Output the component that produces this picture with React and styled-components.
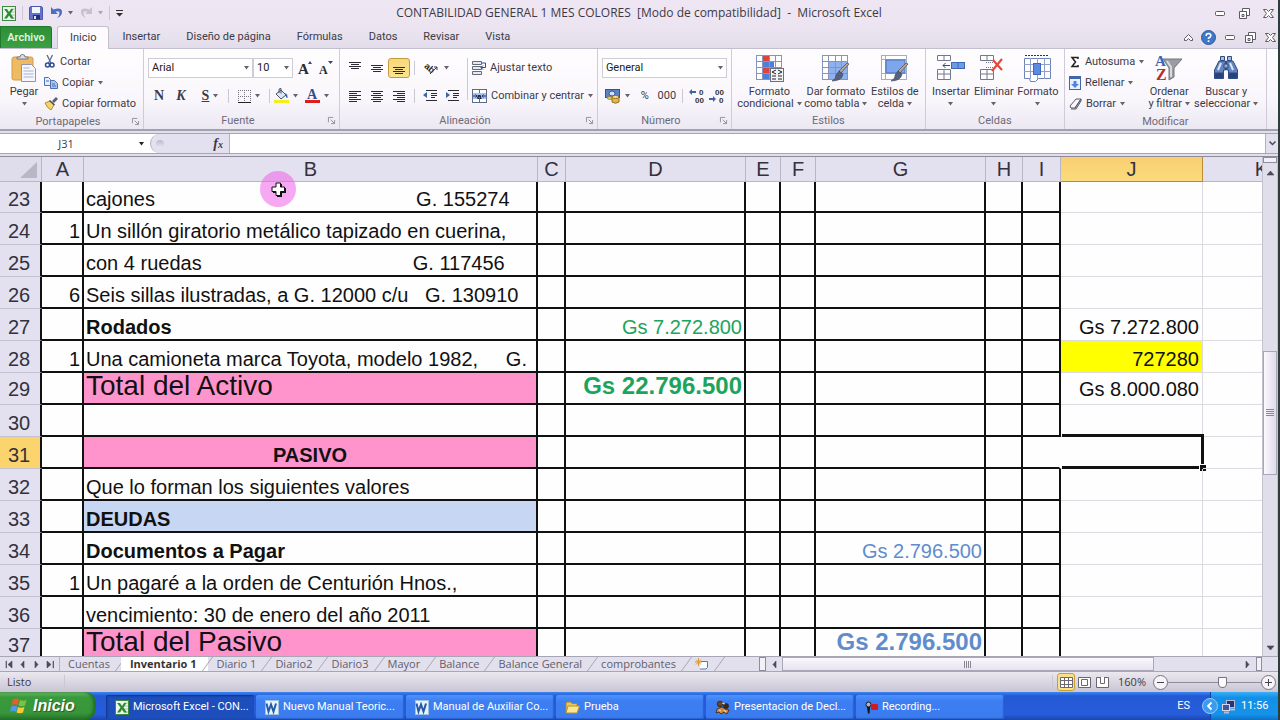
import React, { useState } from 'react';
import styled, { createGlobalStyle, css } from 'styled-components';

const GlobalStyle = createGlobalStyle`
  * { box-sizing: border-box; }
  body { margin: 0; }
  button, input, select { font: inherit; color: inherit; margin: 0; padding: 0; }
  button { background: none; border: 0; cursor: pointer; }
  svg { display: block; flex: none; overflow: visible; }
`;

const Window = styled.div`
  display: flex;
  flex-direction: column;
  height: 100vh;
  overflow: hidden;
  border-right: 2px solid #2e3c3c;
  background: #e3deec;
  color: #3c3a46;
  font-family: 'Open Sans', 'Noto Sans', sans-serif;
  font-size: 11px;
  line-height: 12px;
`;

/* ---------- title bar and tabs ---------- */

const TitleBar = styled.header`
  display: grid;
  grid-template-columns: 1fr auto 1fr;
  align-items: center;
  height: 26px;
  background: linear-gradient(#efe5f3, #ece5f1);
`;

const QuickAccess = styled.div`
  display: flex;
  align-items: center;
  gap: 6px;
  height: 22px;
  padding-left: 2px;
`;

const Title = styled.h1`
  margin: 0;
  font-size: 12px;
  font-weight: 400;
  white-space: pre;
`;

const WindowButtons = styled.div`
  display: flex;
  justify-content: flex-end;
  align-items: center;
  gap: 8px;
  margin-left: auto;
  padding-right: 2px;
`;

const GlyphButton = styled.button`
  display: flex;
  align-items: center;
  justify-content: center;
  gap: 5px;
  width: ${(p) => p.$w || 16}px;
  height: 20px;
`;

const Tabs = styled.nav`
  display: flex;
  align-items: stretch;
  height: 23px;
  background: linear-gradient(#ece5f1, #e3dcea);
  border-bottom: 1px solid #c3bfcd;
  font-family: Roboto, 'Open Sans', sans-serif;
`;

const Tab = styled.button`
  padding: 0 13px;
  ${(p) => p.$active && css`
    margin-bottom: -1px;
    padding: 0 12px;
    border: 1px solid #c3bfcd;
    border-bottom: 0;
    border-radius: 3px 3px 0 0;
    background: #fdfbfe;
  `}
`;

const FileTab = styled.button`
  width: 52px;
  margin-right: 5px;
  border: 1px solid #1f7a2c;
  border-bottom: 0;
  border-radius: 0 3px 0 0;
  background: linear-gradient(#2f8f37, #3ba043);
  color: #dff5dc;
  font-weight: 600;
`;

/* ---------- ribbon ---------- */

const Ribbon = styled.section`
  display: flex;
  height: 82px;
  background: linear-gradient(#fefdfe, #faf7fc 60%, #ece8f3);
  border-bottom: 2px solid #a4a1ae;
  font-family: Roboto, 'Open Sans', sans-serif;
`;

const Group = styled.div`
  display: flex;
  flex-direction: column;
  flex: 0 0 ${(p) => p.$w}px;
  border-right: 1px solid #cfcbd8;
`;

const GroupBody = styled.div`
  display: flex;
  flex: 1;
  padding: 2px 4px 0;
`;

const GroupLabel = styled.div`
  display: flex;
  align-items: center;
  height: 17px;
  padding: 0 4px;
  color: #6d6a78;
  span { flex: 1; text-align: center; }
`;

const Stack = styled.div`
  display: flex;
  flex-direction: column;
`;

const ToolRow = styled.div`
  display: flex;
  align-items: center;
  height: ${(p) => p.$h || 27}px;
`;

const Tool = styled.button`
  display: flex;
  align-items: center;
  justify-content: center;
  gap: 4px;
  width: ${(p) => p.$w || 22}px;
  height: 20px;
  font-family: ${(p) => (p.$serif ? "'Liberation Serif', serif" : 'inherit')};
  font-size: ${(p) => p.$size || 11}px;
  ${(p) => p.$on && css`
    border: 1px solid #c29a3a;
    border-radius: 3px;
    background: linear-gradient(#f6d87d, #fbe58f);
  `}
`;

const SmallButton = styled.button`
  display: flex;
  align-items: center;
  gap: 4px;
  height: 21px;
  white-space: nowrap;
`;

const LargeButton = styled.button`
  display: flex;
  flex-direction: column;
  align-items: center;
  width: ${(p) => p.$w}px;
  padding-top: 3px;
  white-space: nowrap;
  svg { margin-bottom: 4px; }
  span { display: flex; align-items: center; gap: 3px; height: 12px; }
  span svg { margin: 0; }
`;

const Divider = styled.i`
  width: 1px;
  height: ${(p) => p.$h || 14}px;
  margin: 0 ${(p) => p.$m || 0}px;
  background: #cbc7d5;
`;

const SelectBox = styled.label`
  position: relative;
  display: flex;
  width: ${(p) => p.$w}px;
  height: 20px;
  border: 1px solid #cfccd8;
  background: #fff;
  color: #222;
  select {
    flex: 1;
    padding-left: 3px;
    border: 0;
    background: none;
    appearance: none;
  }
  svg {
    position: absolute;
    right: 3px;
    top: 7px;
    pointer-events: none;
  }
`;

/* ---------- formula bar ---------- */

const FormulaBar = styled.div`
  display: flex;
  height: 21px;
  margin: 2px 0;
  border: solid #a8a5b3;
  border-width: 1px 0;
  background: #fff;
`;

const NameBox = styled.input`
  width: 132px;
  border: 0;
  background: #fff;
  text-align: center;
`;

const FxZone = styled.div`
  display: flex;
  align-items: center;
  justify-content: space-between;
  width: 80px;
  padding: 0 6px 0 5px;
  border: 1px solid #b3b0c0;
  border-width: 0 1px;
  border-radius: 10px 0 0 10px;
  background: #e3e0f0;
`;

const Knob = styled.i`
  width: 8px;
  height: 8px;
  border-radius: 50%;
  background: linear-gradient(#bdb9ca, #ebe8f3);
`;

const FxButton = styled.button`
  font: italic bold 14px 'Liberation Serif', serif;
  small { font-size: 10px; }
`;

const FormulaInput = styled.input`
  flex: 1;
  min-width: 0;
  border: 0;
  background: #fff;
`;

const ExpandButton = styled(GlyphButton)`
  height: 19px;
  border-left: 1px solid #b3b0c0;
  background: #e3e0f0;
`;

/* ---------- sheet ---------- */

const SheetArea = styled.main`
  position: relative;
  display: flex;
  flex: 1;
  min-height: 0;
  border-top: 1px solid #8e8b9b;
`;

const SheetView = styled.div`
  flex: 1;
  min-width: 0;
  overflow: hidden;
  background: #fefefe;
`;

const Table = styled.table`
  width: 100%;
  min-width: 1321px;
  table-layout: fixed;
  border-collapse: separate;
  border-spacing: 0;
  color: #111;
  font-family: 'Liberation Sans', Arial, sans-serif;
  font-size: 20px;
  line-height: 24px;
`;

const ColHead = styled.th`
  height: 25px;
  padding: 0;
  border: solid #b9b6c6;
  border-width: 0 1px 1px 0;
  background: ${(p) => (p.$on ? 'linear-gradient(#f8cf72, #fbdb7b)' : '#e3e1f0')};
  color: #33323c;
  font-weight: 400;
  ${(p) => p.$on && 'border-color: #b98d35;'}
`;

const Corner = styled.td`
  padding: 0 4px 3px 0;
  border: solid #b9b6c6;
  border-width: 0 1px 1px 0;
  background: #dfddec;
  vertical-align: bottom;
  svg { margin-left: auto; }
`;

const RowHead = styled.th`
  padding: 0 2px ${(p) => (p.$total ? 3 : 1)}px 0;
  border: solid #c4c1d1;
  border-width: 0 2px 1px 0;
  border-right-color: #111;
  background: ${(p) => (p.$on ? '#fcd46d' : '#e3e1f0')};
  color: #33323c;
  font-weight: 400;
  vertical-align: bottom;
`;

const Row = styled.tr`
  height: ${(p) => (p.$clipped ? 31 : 32)}px;
`;

const Cell = styled.td`
  position: relative;
  padding: 0 ${(p) => (p.$ruled ? 2 : 3)}px ${(p) => p.$lift}px 2px;
  border: solid ${(p) => (p.$ruled ? '#111' : '#dcdbe2')};
  border-width: ${(p) => (p.$ruled ? '0 2px 2px 0' : '0 1px 1px 0')};
  background: ${(p) => p.$fill || 'transparent'};
  color: ${(p) => p.$color || 'inherit'};
  font-size: ${(p) => p.$size || 20}px;
  font-weight: ${(p) => (p.$bold ? 700 : 400)};
  text-align: ${(p) => p.$align || 'left'};
  vertical-align: bottom;
  white-space: pre;
  ${(p) => p.$open && 'border-right-color: transparent;'}
  ${(p) => p.$selected && css`
    &::before {
      content: '';
      position: absolute;
      inset: -3px -2px -1px 1px;
      border: 3px solid #111;
      border-left: 0;
    }
    &::after {
      content: '';
      position: absolute;
      right: -4px;
      bottom: -3px;
      width: 6px;
      height: 6px;
      border: solid #fff;
      border-width: 1px 0 0 1px;
      background: #111;
    }
  `}
`;

const Pointer = styled.div`
  position: absolute;
  left: 260px;
  top: 14px;
  display: flex;
  align-items: center;
  justify-content: center;
  width: 36px;
  height: 36px;
  border-radius: 50%;
  background: rgba(238, 96, 232, 0.55);
`;

const VScroll = styled.div`
  display: grid;
  grid-template-rows: 6px 18px 171fr 124fr 164fr 18px;
  width: 16px;
  border: solid #c4c1d1;
  border-width: 0 1px;
  background: #e1deec;
  button { display: flex; align-items: center; justify-content: center; }
`;

const Thumb = styled.button`
  display: flex;
  align-items: center;
  justify-content: center;
  border: 1px solid #a9a6b8;
  background: ${(p) => (p.$across ? 'linear-gradient(#fbf9fd, #e6e2f0)' : 'linear-gradient(90deg, #fbf9fd, #dedaec)')};
`;

const SplitBox = styled.i`
  border: 1px solid #8f8c9c;
  background: #f3f1f8;
`;

/* ---------- sheet tabs and status bar ---------- */

const SheetBar = styled.div`
  display: flex;
  height: 16px;
  border: solid #a8a5b6;
  border-width: 1px 0;
  background: #e3e0ee;
  color: #615e6c;
`;

const SheetNav = styled.div`
  display: flex;
  align-items: center;
  justify-content: space-around;
  width: 60px;
  padding: 0 2px;
  border-right: 1px solid #b3b0c0;
`;

const SheetTab = styled.button`
  position: relative;
  height: 14px;
  padding: 0 11px 0 8px;
  line-height: 14px;
  white-space: nowrap;
  ${(p) => p.$active && css`
    padding: 0 12px 0 9px;
    background: #fff;
    color: #333;
    font-weight: 700;
  `}
  &::after {
    content: '';
    position: absolute;
    right: 0;
    top: 0;
    width: 1px;
    height: 14px;
    background: #a8a5b6;
    transform: skewX(-36deg);
  }
`;

const HScroll = styled.div`
  display: grid;
  grid-template-columns: 7px 14px 376fr 84fr 16px 6px;
  gap: 0 1px;
  flex: 0 0 503px;
  margin: 0 16px 0 auto;
  button { display: flex; align-items: center; justify-content: center; }
`;

const StatusBar = styled.footer`
  display: flex;
  align-items: center;
  height: 20px;
  padding: 0 2px 0 7px;
  background: linear-gradient(#ebe8f0, #c9c5d3);
  & > span { width: 57px; }
`;

const ViewTools = styled.div`
  display: flex;
  align-items: center;
  margin-left: auto;
`;

const ViewButton = styled(GlyphButton)`
  height: 18px;
  ${(p) => p.$on && css`
    border: 1px solid #c9a030;
    border-radius: 3px;
    background: #fbe08a;
  `}
`;

const ZoomSlider = styled.input`
  width: 93px;
  height: 16px;
  appearance: none;
  background: linear-gradient(#8f8c9a, #8f8c9a) center / 100% 1px no-repeat;
  &::-webkit-slider-thumb {
    appearance: none;
    width: 9px;
    height: 11px;
    border: 1px solid #77747f;
    border-radius: 1px 1px 5px 5px;
    background: #fbfafc;
  }
`;

const RoundButton = styled.button`
  display: flex;
  align-items: center;
  justify-content: center;
  width: 15px;
  height: 15px;
  border: 1px solid #77747f;
  border-radius: 50%;
  background: #f6f4f9;
`;

/* ---------- taskbar ---------- */

const Taskbar = styled.div`
  display: flex;
  height: 28px;
  background: linear-gradient(#3b86f3, #2459d4 14%, #265ddb 80%, #1d45ad);
  color: #fff;
  font-family: Roboto, 'Liberation Sans', sans-serif;
`;

const StartButton = styled.button`
  display: flex;
  align-items: center;
  gap: 5px;
  width: 96px;
  margin-right: 10px;
  padding-left: 10px;
  border-radius: 0 10px 12px 0;
  background: linear-gradient(#6cb96c, #399a3b 18%, #37963a 75%, #226f26);
  box-shadow: inset -3px 0 3px #23702a;
  font: italic bold 16px 'Liberation Sans', sans-serif;
  text-shadow: 1px 1px 1px #245a22;
`;

const TaskButton = styled.button`
  display: flex;
  align-items: center;
  gap: 4px;
  flex: 0 1 148px;
  min-width: 0;
  margin: 3px 2px 1px 0;
  padding-left: 9px;
  border-radius: 2px;
  background: ${(p) => (p.$active ? '#1d4ebb' : 'linear-gradient(#4e92fa, #3c7ff3 25%, #3b7bee)')};
  box-shadow: ${(p) => (p.$active ? 'inset 1px 1px 2px #12338a' : 'inset -1px -1px 1px #2a60cc')};
  white-space: nowrap;
`;

const Language = styled.span`
  align-self: center;
  margin-left: auto;
  padding-right: 20px;
`;

const Tray = styled.div`
  display: flex;
  align-items: center;
  gap: 3px;
  width: 68px;
  border-left: 1px solid #1440a0;
  background: linear-gradient(#3aaef5, #1290e8 20%, #1593ea 80%, #0f6fc4);
  time { margin-left: 2px; }
  button { margin-left: -9px; }
`;

/* ---------- icons ---------- */

const Caret = ({ color = '#66636f' }) => (
  <svg width="5" height="4" viewBox="0 0 5 4"><path d="M0 0h5L2.500 3.500z" fill={color} /></svg>
);

const Arrow = ({ d }) => (
  <svg width="9" height="9" viewBox="0 0 9 9"><path d={d} fill="#4c4959" stroke="#4c4959" strokeWidth=".6" /></svg>
);

const Launcher = () => (
  <svg width="7" height="7" viewBox="0 0 8 8" fill="none" stroke="#8b8896">
    <path d="M.5 6V.5H6M3 3l4 4M7.500 3.500v4h-4" />
  </svg>
);

const ExcelIcon = () => (
  <svg width="14" height="15" viewBox="0 0 14 15">
    <rect x=".5" y=".5" width="13" height="14" fill="#eef8ec" stroke="#3c8b3f" />
    <path d="M9 3h4M9 6h4M9 9h4M9 12h4" stroke="#9ccc9a" />
    <path d="M2 3h3l2 3 2-3h2.500L8.500 7.500l3.500 5H9L7 9.500 5 12.500H2l3.500-5z" fill="#2f8a35" />
  </svg>
);

const WordIcon = () => (
  <svg width="14" height="15" viewBox="0 0 14 15">
    <rect x=".5" y=".5" width="13" height="14" fill="#e8f2fc" stroke="#9dc0e6" />
    <path d="M1.500 3.500l2 8 2.500-7 2.500 7 2.500-8" fill="none" stroke="#245ba8" strokeWidth="2" />
  </svg>
);

const FolderIcon = () => (
  <svg width="15" height="13" viewBox="0 0 15 13">
    <path d="M1 11V2l1-1h4l1 1.500h5V5" fill="#e9c75c" stroke="#a8862b" />
    <path d="M1 12L3 5h11.500L12 12z" fill="#fbe594" stroke="#b8942f" />
  </svg>
);

const ReelIcon = () => (
  <svg width="15" height="15" viewBox="0 0 15 15" stroke="#2b1a0c" strokeWidth=".7">
    <circle cx="5" cy="4" r="2.800" fill="#6a4526" />
    <circle cx="11" cy="6" r="2.500" fill="#3d2815" />
    <path d="M2 9l5-2 3 2 4 1-2 4-3-2-3 2-2-2-3 1z" fill="#d98a35" />
    <path d="M7 3l3 1M4 10l2 1M9 10l2 2" stroke="#f2cf8a" strokeWidth="1.300" />
  </svg>
);

const RecIcon = () => (
  <svg width="13" height="13" viewBox="0 0 13 13">
    <circle cx="3.500" cy="3.500" r="2.500" fill="#b4b4bb" stroke="#17171c" />
    <path d="M2 6l1 6.500h1.500L5 6z" fill="#111" />
    <rect x="6" y="3" width="7" height="6" rx="1" fill="#d3191c" />
  </svg>
);

const SaveIcon = () => (
  <svg width="14" height="14" viewBox="0 0 14 14">
    <path d="M.5 1.500l1-1h11l1 1v12H.5z" fill="#6273cd" stroke="#4a58ad" />
    <rect x="3" y="1" width="8" height="6" fill="#f4f6fd" />
    <rect x="4" y="9" width="7" height="4.500" fill="#27306f" />
    <rect x="5" y="10" width="2" height="3" fill="#dfe3f8" />
  </svg>
);

const UndoIcon = ({ flip, color }) => (
  <svg width="13" height="12" viewBox="0 0 13 12">
    <g transform={flip ? 'matrix(-1 0 0 1 13 0)' : undefined}>
      <path d="M1 0v7h7L5.500 4.800Q9.500 3 9.500 6 9.500 8.500 7 11q5-2 5-6 0-5-8.500-2.600z" fill={color} />
    </g>
  </svg>
);

const MinIcon = () => (
  <svg width="10" height="5" viewBox="0 0 10 5"><rect x=".5" y=".5" width="9" height="4" rx="1" fill="#fff" stroke="#5d5a66" /></svg>
);

const RestoreIcon = () => (
  <svg width="11" height="11" viewBox="0 0 11 11" fill="#fff" stroke="#5d5a66">
    <path d="M3.500.5h7v7h-7z" /><path d="M.5 3.500h7v7h-7z" /><path d="M3 6.500h2v2H3z" />
  </svg>
);

const CloseIcon = () => (
  <svg width="11" height="9" viewBox="0 0 11 9">
    <path d="M.5.5h3l2 2 2-2h3L7.500 4.500l3 4h-3l-2-2-2 2h-3l3-4z" fill="#fff" stroke="#5d5a66" />
  </svg>
);

const HelpIcon = () => (
  <svg width="15" height="15" viewBox="0 0 15 15">
    <circle cx="7.500" cy="7.500" r="7" fill="#3f78c6" stroke="#2b5ba5" />
    <path d="M5.200 6Q5 3.500 7.500 3.500T9.800 5.700Q9.800 7 7.500 8.200V9" fill="none" stroke="#fff" strokeWidth="1.600" />
    <rect x="6.700" y="10.300" width="1.700" height="1.700" fill="#fff" />
  </svg>
);

const PasteIcon = () => (
  <svg width="26" height="28" viewBox="0 0 26 28">
    <rect x="1" y="3" width="21" height="23" rx="2" fill="#eebb62" stroke="#d19c48" />
    <path d="M6 5V3h3q0-2.500 2.500-2.500T14 3h3v2z" fill="#dcdde6" stroke="#777984" />
    <path d="M10.500 10.500h10l4 4v13h-14z" fill="#f6f7fd" stroke="#8c93b5" />
    <path d="M12.500 14h6M12.500 17h10M12.500 20h10M12.500 23h10" stroke="#a9b1d2" />
  </svg>
);

const CutIcon = () => (
  <svg width="12" height="13" viewBox="0 0 12 13" fill="none">
    <path d="M3 0l4 8M8.500 0l-4 8" stroke="#5a6b94" strokeWidth="1.300" />
    <circle cx="3.500" cy="10" r="2" stroke="#2c4d9c" strokeWidth="1.500" />
    <circle cx="8" cy="10" r="2" stroke="#2c4d9c" strokeWidth="1.500" />
  </svg>
);

const CopyIcon = () => (
  <svg width="14" height="12" viewBox="0 0 14 12" fill="#e6eefb" stroke="#4d6fb3">
    <path d="M.5.5h4l2 2v6h-6z" /><path d="M6.500 3.500h4l3 3v5h-7z" fill="#a9c3ef" />
    <path d="M2 4h3M8 7h3M8 9h4" />
  </svg>
);

const BrushIcon = () => (
  <svg width="14" height="13" viewBox="0 0 14 13">
    <path d="M8 4l4-4 2 2-4 4z" fill="#5c5f70" />
    <path d="M1 6l5-2 4 4-3 5Q3 11 1 6z" fill="#f4d56c" stroke="#b78c2a" />
    <path d="M5.500 3.500l5 4.500" stroke="#4b4e5c" strokeWidth="1.600" />
  </svg>
);

const Lines = ({ rows, w = 14, children }) => (
  <svg width={w} height="14" viewBox={`0 0 ${w} 14`} stroke="#2c2b33">
    {rows.map(([x1, x2, y]) => <path key={y} d={`M${x1} ${y}H${x2}`} />)}
    {children}
  </svg>
);

const OrientIcon = () => (
  <svg width="16" height="14" viewBox="0 0 16 14" fill="none" stroke="#3a3843">
    <text x="0" y="9" fontSize="9" fontFamily="Liberation Sans" fontWeight="700" fill="#222" stroke="none" transform="rotate(40 4 7)">ab</text>
    <path d="M6 13l7-7M13 9V6h-3" />
  </svg>
);

const WrapIcon = () => (
  <svg width="14" height="14" viewBox="0 0 14 14" fill="none" stroke="#4b6187">
    <path d="M.5.5h9v3h-9zM.5 5.500h9v3h-9zM.5 10.500h9v3h-9z" fill="#e6e9f2" stroke="#63687a" />
    <path d="M10 2h3.500v4.500H9M11 4.500l-2 2 2 2" stroke="#2a4f93" />
  </svg>
);

const MergeIcon = () => (
  <svg width="15" height="14" viewBox="0 0 15 14">
    <rect x=".5" y=".5" width="14" height="13" fill="#fff" stroke="#5d6b8d" />
    <path d="M0 4.500h15M0 9.500h15M7.500 0v4M7.500 10v4" stroke="#5d6b8d" />
    <rect x="1" y="4" width="13" height="6" fill="#a9c3ee" />
    <text x="5" y="9.500" fontSize="8" fontWeight="700" fontFamily="Liberation Sans">a</text>
    <path d="M1 7h4M10 7h4M3.500 5.500L5 7 3.500 8.500M11.500 5.500L10 7l1.500 1.500" fill="none" stroke="#20386e" />
  </svg>
);

const BordersIcon = () => (
  <svg width="13" height="13" viewBox="0 0 13 13" stroke="#77747f">
    <path d="M.5 0v12M6.500 0v12M12.500 0v12M0 .5h12M0 6.500h12" strokeDasharray="1 1" />
    <path d="M0 12.500h13" stroke="#222" />
  </svg>
);

const FillIcon = () => (
  <svg width="15" height="16" viewBox="0 0 15 16">
    <path d="M2 6l5-4 5 5-5 4z" fill="#dfe5f2" stroke="#43536f" />
    <path d="M5 5V2q0-2 2-1.500v5" fill="none" stroke="#43536f" />
    <path d="M11 5q3 1 2.500 5-2 0-2-4z" fill="#3764b4" />
    <rect x="0" y="12" width="15" height="3" fill="#f4ee21" />
  </svg>
);

const FontColorIcon = () => (
  <svg width="15" height="16" viewBox="0 0 15 16">
    <text x="2" y="11" fontSize="14" fontWeight="700" fontFamily="Liberation Serif" fill="#2e4f93">A</text>
    <rect x="0" y="12" width="15" height="3" fill="#df1b1b" />
  </svg>
);

const GrowIcon = ({ size, up }) => (
  <svg width="15" height="15" viewBox="0 0 15 15">
    <text x="0" y="13" fontSize={size} fontWeight="700" fontFamily="Liberation Serif" fill="#2b2a33">A</text>
    <path d={up ? 'M10 3l2-3 2 3z' : 'M9 0h5l-2.500 3z'} fill="#31477c" />
  </svg>
);

const CurrencyIcon = () => (
  <svg width="16" height="15" viewBox="0 0 16 15">
    <rect x=".5" y=".5" width="14" height="8" fill="#5b83c7" stroke="#2f5498" />
    <ellipse cx="7" cy="4.500" rx="3" ry="2.500" fill="#cfe0f7" stroke="#2f5498" />
    <ellipse cx="5" cy="9" rx="3" ry="1.500" fill="#e8c45a" stroke="#94712a" strokeWidth=".6" />
    <path d="M7 8h7v5q-3.500 2.500-7 0z" fill="#e2b64b" stroke="#94712a" />
    <ellipse cx="10.500" cy="8" rx="3.500" ry="1.500" fill="#f7e29b" stroke="#94712a" />
  </svg>
);

const DecimalIcon = ({ more }) => (
  <svg width="15" height="14" viewBox="0 0 15 14" fontFamily="Liberation Sans" fontSize="8" fontWeight="700">
    <text x={more ? 10 : 6} y="6" fill="#333">{more ? '0' : '00'}</text>
    <text x={more ? 6 : 10} y="14" fill="#333">{more ? '00' : '0'}</text>
    <path d={more ? 'M0 3l3-3v2h4v2H3v2z' : 'M7 10l-3-3v2H0v2h4v2z'} fill="#3d62a8" />
  </svg>
);

const TableIcon = ({ kind }) => (
  <svg width="29" height="28" viewBox="0 0 29 28">
    <rect x="1.500" y="1.500" width="25" height="24" fill="#fff" />
    {kind === 'cond' && (
      <>
        <rect x="7" y="1" width="7" height="6" fill="#e0433e" />
        <rect x="7" y="7" width="12" height="6" fill="#4c7fd9" />
        <rect x="7" y="13" width="9" height="6" fill="#e0433e" />
        <rect x="7" y="19" width="7" height="6" fill="#4c7fd9" />
      </>
    )}
    {kind === 'table' && <rect x="8" y="7" width="19" height="18" fill="#8fb2ef" />}
    {kind !== 'cell' && <path d="M1.500 1v25M7.500 1v25M14.500 1v25M20.500 1v25M26.500 1v25M1 1.500h26M1 7.500h26M1 13.500h26M1 19.500h26M1 25.500h26" stroke="#8793b8" />}
    {kind === 'cell' && (
      <>
        <path d="M1.500 1v25M5.500 1v25M26.500 1v25M1 1.500h26M1 5.500h26M1 19.500h26M1 25.500h26" stroke="#a3adca" />
        <rect x="6" y="6" width="19" height="13" fill="#7ea6ec" stroke="#4770bb" />
      </>
    )}
    {kind === 'cond' ? (
      <>
        <rect x="15.500" y="14.500" width="13" height="13" fill="#f2f3f7" stroke="#6b6f7e" />
        <path d="M21 16l-4 2 4 2M17 22h4M17 25h4M23 16l4 2-4 2M23 22h4M23 25h4" fill="none" stroke="#222" />
      </>
    ) : (
      <>
        <path d="M28 10l-8 9-2-2 8-8z" fill="#b9a592" stroke="#4f5566" strokeWidth=".8" />
        <path d="M18 17l4 3q-1 7-11 7 5-3 4-6z" fill="#53627f" stroke="#37435c" strokeWidth=".6" />
      </>
    )}
  </svg>
);

const CellsIcon = ({ kind }) => (
  <svg width="30" height="28" viewBox="0 0 30 28" fill="#fff" stroke="#72788e">
    {kind === 'format' ? (
      <>
        <path d="M2 1.500h24" stroke="#333" strokeDasharray="2 1" />
        <path d="M1.500 4.500h26v20h-12l-3 3h-5l-1-3h-5z" stroke="#6b82bb" />
        <path d="M7.500 4v21M14.500 4v21M21.500 4v21M1 10.500h27M1 17.500h27" stroke="#8fa0cc" />
        <rect x="10.500" y="9.500" width="7" height="11" fill="#5c8ae0" stroke="#3c69bd" />
      </>
    ) : (
      <>
        <path d="M1.500 1.500h13v5h-13zM1.500 15.500h13v10h-13z" />
        <path d="M8 1v6M8 15v11M1 20h14" />
        {kind === 'insert'
          ? <><rect x="15.500" y="8.500" width="13" height="6" fill="#6f9be6" stroke="#3e68b5" /><path d="M22 8v7" stroke="#3e68b5" /><path d="M14 11.500H7M9.500 9L7 11.500 9.500 14" fill="none" stroke="#334a7c" /></>
          : <><path d="M7 8.500h7M7 13.500h7" strokeDasharray="1 1" /><path d="M14 6l9 10M23 5L13 17" stroke="#e5493b" strokeWidth="2.200" /></>}
      </>
    )}
  </svg>
);

const SortIcon = () => (
  <svg width="28" height="28" viewBox="0 0 28 28" fontFamily="Liberation Serif" fontWeight="700">
    <path d="M8 5h19l-8 9v9l-5 3V14z" fill="#9b9da6" stroke="#73757f" />
    <path d="M12 7l4 6v10" fill="none" stroke="#d9dae0" strokeWidth="2" />
    <text x="0" y="12" fontSize="15" fill="#3765b5">A</text>
    <text x="1" y="26" fontSize="16" fill="#b52e2e">Z</text>
  </svg>
);

const FindIcon = () => (
  <svg width="28" height="28" viewBox="0 0 28 28" stroke="#2f4b80">
    <path d="M8.500 2.500h4v4h-4zM15.500 2.500h4v4h-4z" fill="#a9bfe2" />
    <path d="M7 7h6.500v9h-2v8.500h-9V16zM21 7h-6.500v9h2v8.500h9V16z" fill="#6284bf" />
    <path d="M12 10h4v4h-4z" fill="#8ea8d2" />
    <path d="M3 19h8v5H3zM17 19h8v5h-8z" fill="#27427a" />
    <path d="M6 16l3-7M18 9l3 7" stroke="#dbe7f9" strokeWidth="2" />
  </svg>
);

const DownFillIcon = () => (
  <svg width="12" height="14" viewBox="0 0 12 14">
    <rect x=".5" y=".5" width="11" height="13" fill="#eaf1fc" stroke="#4265ab" />
    <path d="M0 2h12" stroke="#4265ab" strokeWidth="2" />
    <path d="M4.500 5h3v3H10l-4 4-4-4h2.500z" fill="#4f83dd" />
  </svg>
);

const EraserIcon = () => (
  <svg width="13" height="12" viewBox="0 0 13 12" stroke="#55586a">
    <path d="M1 8l6-7h5L6 10H2z" fill="#f7f7fb" /><path d="M6 10l6-9v2L7 11H2" fill="#b8bac8" />
  </svg>
);

const SumIcon = () => (
  <svg width="12" height="12" viewBox="0 0 12 12">
    <path d="M9 3V1.500H3L6.500 6 3 10.500h6V9" fill="none" stroke="#222" strokeWidth="1.500" />
  </svg>
);

const ViewIcon = ({ d }) => (
  <svg width="13" height="11" viewBox="0 0 13 11" fill="#fff" stroke="#6b6875"><path d="M.5.5h12v10H.5z" /><path d={d} /></svg>
);

const NewSheetIcon = () => (
  <svg width="14" height="12" viewBox="0 0 14 12" fill="none">
    <path d="M5.500 3.500h7v6l-1.500 1.500H5" fill="#fff" stroke="#5c74b3" />
    <path d="M3.500 0v8M0 4h7M1 1.500l5 5M6 1.500l-5 5" stroke="#d79a34" />
  </svg>
);

const Flag = () => (
  <svg width="18" height="18" viewBox="0 0 18 18">
    <path d="M3 2.500q3-2 6 0L7.500 8q-3-1.500-6 0z" fill="#ee5a2a" />
    <path d="M10 3q3 1.500 6.500 0L15 8.500q-3 1.500-6.500 0z" fill="#7cc242" />
    <path d="M1.200 9.500q3-1.500 6 0L6 15q-3-2-6 0z" fill="#4d9af0" />
    <path d="M8 10q3 1.500 6.500 0L13 15.500q-3 1.500-6.500 0z" fill="#fbc834" />
  </svg>
);

const TrayIcon = () => (
  <svg width="15" height="15" viewBox="0 0 15 15">
    <rect x="5.500" y="1.500" width="8" height="7" fill="#26337a" stroke="#b7bcd4" />
    <rect x="1.500" y="5.500" width="7" height="6" fill="#4a5299" stroke="#d5d8e6" />
    <path d="M3 13.500h5M9 10.500h5" stroke="#b7bcd4" strokeWidth="2" />
  </svg>
);

/* ---------- data ---------- */

const columns = [
  ['A', 42], ['B', 454], ['C', 28], ['D', 180], ['E', 35], ['F', 35],
  ['G', 170], ['H', 37], ['I', 38], ['J', 142], ['K'],
];

const PINK = '#ff94cd';
const GREEN = '#1ca45c';
const BLUE = '#5f8dcc';
const gap = (n) => ' '.repeat(n);

const rows = [
  { n: 23, B: { text: `cajones${gap(47)}G. 155274` } },
  { n: 24, A: { text: '1' }, B: { text: 'Un sillón giratorio metálico tapizado en cuerina,' } },
  { n: 25, B: { text: `con 4 ruedas${gap(38)}G. 117456` } },
  { n: 26, A: { text: '6' }, B: { text: `Seis sillas ilustradas, a G. 12000 c/u${gap(3)}G. 130910` } },
  { n: 27, B: { text: 'Rodados', bold: true }, D: { text: 'Gs 7.272.800', color: GREEN }, J: { text: 'Gs 7.272.800' } },
  { n: 28, A: { text: '1' }, B: { text: `Una camioneta marca Toyota, modelo 1982,${gap(5)}G.` }, J: { text: '727280', fill: '#ffff00' } },
  { n: 29, total: true, B: { text: 'Total del Activo', size: 28, fill: PINK }, D: { text: 'Gs 22.796.500', size: 24, bold: true, color: GREEN }, J: { text: 'Gs 8.000.080' } },
  { n: 30 },
  { n: 31, B: { text: 'PASIVO', bold: true, align: 'center', fill: PINK } },
  { n: 32, B: { text: 'Que lo forman los siguientes valores' } },
  { n: 33, B: { text: 'DEUDAS', bold: true, fill: '#c7d6f3' } },
  { n: 34, B: { text: 'Documentos a Pagar', bold: true }, G: { text: 'Gs 2.796.500', color: BLUE } },
  { n: 35, A: { text: '1' }, B: { text: 'Un pagaré a la orden de Centurión Hnos.,' } },
  { n: 36, B: { text: 'vencimiento: 30 de enero del año 2011' } },
  { n: 37, total: true, B: { text: 'Total del Pasivo', size: 28, fill: PINK }, G: { text: 'Gs 2.796.500', size: 24, bold: true, color: BLUE } },
];

const ribbonTabs = ['Inicio', 'Insertar', 'Diseño de página', 'Fórmulas', 'Datos', 'Revisar', 'Vista'];
const sheetTabs = ['Cuentas', 'Inventario 1', 'Diario 1', 'Diario2', 'Diario3', 'Mayor', 'Balance', 'Balance General', 'comprobantes'];

const tasks = [
  [<ExcelIcon />, 'Microsoft Excel - CON...'],
  [<WordIcon />, 'Nuevo Manual Teoric...'],
  [<WordIcon />, 'Manual de Auxiliar Co...'],
  [<FolderIcon />, 'Prueba'],
  [<ReelIcon />, 'Presentacion de Decl...'],
  [<RecIcon />, 'Recording...'],
];

/* ---------- parts ---------- */

function RibbonGroup({ label, width, launcher, children }) {
  return (
    <Group $w={width}>
      <GroupBody>{children}</GroupBody>
      <GroupLabel><span>{label}</span>{launcher && <Launcher />}</GroupLabel>
    </Group>
  );
}

function Large({ icon, width, lines }) {
  return (
    <LargeButton $w={width}>
      {icon}
      <span>{lines[0]}</span>
      <span>{lines[1]}<Caret /></span>
    </LargeButton>
  );
}

function Combo({ label, value, width }) {
  return (
    <SelectBox $w={width}>
      <select aria-label={label} defaultValue={value}><option>{value}</option></select>
      <Caret />
    </SelectBox>
  );
}

// lift keeps big and small text of a total row clear of the cell's lower edge
function liftOf(row, cell, ruled) {
  const base = ruled ? 0 : 1;
  if (!row.total) return base;
  return cell.size ? 5 : base + 2;
}

function SheetRow({ row, first }) {
  return (
    <Row $clipped={first}>
      <RowHead scope="row" $on={row.n === 31} $total={row.total}>{row.n}</RowHead>
      {columns.map(([name]) => {
        const c = row[name] || {};
        const ruled = name !== 'J' && name !== 'K';
        return (
          <Cell
            key={name}
            $ruled={ruled}
            $fill={c.fill}
            $color={c.color}
            $size={c.size}
            $bold={c.bold}
            $align={c.align || (name === 'B' ? 'left' : 'right')}
            $lift={liftOf(row, c, ruled)}
            $selected={row.n === 31 && name === 'J'}
            $open={row.n === 31 && name === 'I'}
          >
            {c.text}
          </Cell>
        );
      })}
    </Row>
  );
}

function App() {
  const [tab, setTab] = useState('Inicio');
  const [sheet, setSheet] = useState('Inventario 1');
  const [formula, setFormula] = useState('');
  const [zoom, setZoom] = useState(60);

  return (
    <Window>
      <GlobalStyle />

      <TitleBar>
        <QuickAccess>
          <ExcelIcon />
          <Divider />
          <GlyphButton $w={14} aria-label="Guardar"><SaveIcon /></GlyphButton>
          <GlyphButton $w={24} aria-label="Deshacer"><UndoIcon color="#4a6ec4" /><Caret /></GlyphButton>
          <GlyphButton $w={24} aria-label="Rehacer"><UndoIcon flip color="#c5c1cf" /><Caret color="#aaa6b4" /></GlyphButton>
          <Divider />
          <GlyphButton $w={7} aria-label="Personalizar"><svg width="7" height="7" viewBox="0 0 7 7" fill="#333"><path d="M0 0h7v1H0zM0 3h7L3.500 6.500z" /></svg></GlyphButton>
        </QuickAccess>
        <Title>{'CONTABILIDAD GENERAL 1 MES COLORES  [Modo de compatibilidad]  -  Microsoft Excel'}</Title>
        <WindowButtons>
          <GlyphButton aria-label="Minimizar"><MinIcon /></GlyphButton>
          <GlyphButton aria-label="Restaurar"><RestoreIcon /></GlyphButton>
          <GlyphButton aria-label="Cerrar"><CloseIcon /></GlyphButton>
        </WindowButtons>
      </TitleBar>

      <Tabs>
        <FileTab>Archivo</FileTab>
        {ribbonTabs.map((name) => (
          <Tab key={name} $active={name === tab} onClick={() => setTab(name)}>{name}</Tab>
        ))}
        <WindowButtons>
          <GlyphButton $w={10} aria-label="Minimizar la cinta">
            <svg width="9" height="7" viewBox="0 0 9 7"><path d="M.5 4.500l4-4 4 4v2h-2l-2-2-2 2h-2z" fill="#fff" stroke="#5d5a66" /></svg>
          </GlyphButton>
          <GlyphButton $w={15} aria-label="Ayuda"><HelpIcon /></GlyphButton>
          <GlyphButton $w={12} aria-label="Minimizar libro"><MinIcon /></GlyphButton>
          <GlyphButton $w={12} aria-label="Restaurar libro"><RestoreIcon /></GlyphButton>
          <GlyphButton $w={12} aria-label="Cerrar libro"><CloseIcon /></GlyphButton>
        </WindowButtons>
      </Tabs>

      <Ribbon>
        <RibbonGroup label="Portapapeles" width={144} launcher>
          <Large icon={<PasteIcon />} width={40} lines={['Pegar']} />
          <Stack>
            <SmallButton><CutIcon />Cortar</SmallButton>
            <SmallButton><CopyIcon />Copiar <Caret /></SmallButton>
            <SmallButton><BrushIcon />Copiar formato</SmallButton>
          </Stack>
        </RibbonGroup>

        <RibbonGroup label="Fuente" width={196} launcher>
          <Stack>
            <ToolRow $h={34}>
              <Combo label="Fuente" value="Arial" width={105} />
              <Combo label="Tamaño" value="10" width={40} />
              <Tool $w={24} aria-label="Aumentar tamaño"><GrowIcon size={15} up /></Tool>
              <Tool $w={18} aria-label="Disminuir tamaño"><GrowIcon size={12} /></Tool>
            </ToolRow>
            <ToolRow $h={22}>
              <Tool $serif $size={14}><b>N</b></Tool>
              <Tool $serif $size={14}><b><i>K</i></b></Tool>
              <Tool $serif $size={14} $w={36}><b><u>S</u></b><Caret /></Tool>
              <Divider />
              <Tool $w={40} aria-label="Bordes"><BordersIcon /><Caret /></Tool>
              <Divider />
              <Tool $w={32} aria-label="Color de relleno"><FillIcon /><Caret /></Tool>
              <Tool $w={30} aria-label="Color de fuente"><FontColorIcon /><Caret /></Tool>
            </ToolRow>
          </Stack>
        </RibbonGroup>

        <RibbonGroup label="Alineación" width={257} launcher>
          <Stack>
            <ToolRow $h={34}>
              <Tool aria-label="Arriba"><Lines rows={[[1, 13, 1.5], [3, 11, 3.5], [1, 13, 5.5], [3, 11, 7.5]]} /></Tool>
              <Tool aria-label="Medio"><Lines rows={[[1, 13, 4.5], [3, 11, 6.5], [1, 13, 8.5], [3, 11, 10.5]]} /></Tool>
              <Tool $on aria-label="Abajo"><Lines rows={[[1, 13, 6.5], [3, 11, 8.5], [1, 13, 10.5], [3, 11, 12.5]]} /></Tool>
              <Divider $m={4} />
              <Tool $w={34} aria-label="Orientación"><OrientIcon /><Caret /></Tool>
            </ToolRow>
            <ToolRow $h={22}>
              <Tool aria-label="Izquierda"><Lines rows={[[1, 13, 2.5], [1, 9, 4.5], [1, 13, 6.5], [1, 9, 8.5], [1, 13, 10.5], [1, 9, 12.5]]} /></Tool>
              <Tool aria-label="Centro"><Lines rows={[[1, 13, 2.5], [3, 11, 4.5], [1, 13, 6.5], [3, 11, 8.5], [1, 13, 10.5], [3, 11, 12.5]]} /></Tool>
              <Tool aria-label="Derecha"><Lines rows={[[1, 13, 2.5], [5, 13, 4.5], [1, 13, 6.5], [5, 13, 8.5], [1, 13, 10.5], [5, 13, 12.5]]} /></Tool>
              <Divider $m={4} />
              <Tool aria-label="Disminuir sangría"><Lines w={15} rows={[[3, 14, 1.5], [8, 14, 4.5], [8, 14, 6.5], [8, 12, 8.5], [3, 14, 11.5]]}><path d="M0 6l4-3v6z" fill="#3d62a8" stroke="none" /></Lines></Tool>
              <Tool aria-label="Aumentar sangría"><Lines w={15} rows={[[3, 14, 1.5], [8, 14, 4.5], [8, 14, 6.5], [8, 12, 8.5], [3, 14, 11.5]]}><path d="M5 6L1 3v6z" fill="#3d62a8" stroke="none" /></Lines></Tool>
            </ToolRow>
          </Stack>
          <ToolRow $h={56}><Divider $h={42} $m={4} /></ToolRow>
          <Stack>
            <ToolRow $h={34}><SmallButton><WrapIcon />Ajustar texto</SmallButton></ToolRow>
            <ToolRow $h={22}><SmallButton><MergeIcon />Combinar y centrar <Caret /></SmallButton></ToolRow>
          </Stack>
        </RibbonGroup>

        <RibbonGroup label="Número" width={134} launcher>
          <Stack>
            <ToolRow $h={34}><Combo label="Formato de número" value="General" width={125} /></ToolRow>
            <ToolRow $h={22}>
              <Tool $w={32} aria-label="Moneda"><CurrencyIcon /><Caret /></Tool>
              <Tool $w={22}>%</Tool>
              <Tool $w={22}>000</Tool>
              <Divider $m={4} />
              <Tool $w={20} aria-label="Aumentar decimales"><DecimalIcon more /></Tool>
              <Tool $w={20} aria-label="Disminuir decimales"><DecimalIcon /></Tool>
            </ToolRow>
          </Stack>
        </RibbonGroup>

        <RibbonGroup label="Estilos" width={193}>
          <Large icon={<TableIcon kind="cond" />} width={67} lines={['Formato', 'condicional']} />
          <Large icon={<TableIcon kind="table" />} width={66} lines={['Dar formato', 'como tabla']} />
          <Large icon={<TableIcon kind="cell" />} width={52} lines={['Estilos de', 'celda']} />
        </RibbonGroup>

        <RibbonGroup label="Celdas" width={138}>
          <Large icon={<CellsIcon kind="insert" />} width={42} lines={['Insertar']} />
          <Large icon={<CellsIcon kind="delete" />} width={44} lines={['Eliminar']} />
          <Large icon={<CellsIcon kind="format" />} width={44} lines={['Formato']} />
        </RibbonGroup>

        <RibbonGroup label="Modificar" width={202}>
          <Stack>
            <SmallButton><SumIcon />Autosuma <Caret /></SmallButton>
            <SmallButton><DownFillIcon />Rellenar <Caret /></SmallButton>
            <SmallButton><EraserIcon />Borrar <Caret /></SmallButton>
          </Stack>
          <Large icon={<SortIcon />} width={50} lines={['Ordenar', 'y filtrar']} />
          <Large icon={<FindIcon />} width={64} lines={['Buscar y', 'seleccionar']} />
        </RibbonGroup>
      </Ribbon>

      <FormulaBar>
        <NameBox aria-label="Cuadro de nombres" defaultValue="J31" />
        <GlyphButton $w={18} aria-label="Lista de nombres"><Caret color="#222" /></GlyphButton>
        <FxZone>
          <Knob />
          <FxButton aria-label="Insertar función">f<small>x</small></FxButton>
        </FxZone>
        <FormulaInput aria-label="Barra de fórmulas" value={formula} onChange={(e) => setFormula(e.target.value)} />
        <ExpandButton $w={13} aria-label="Expandir">
          <svg width="7" height="5" viewBox="0 0 7 5"><path d="M.5.5l3 3 3-3" fill="none" stroke="#4c4959" strokeWidth="1.500" /></svg>
        </ExpandButton>
      </FormulaBar>

      <SheetArea>
        <SheetView>
          <Table>
            <colgroup>
              <col width="42" />
              {columns.map(([name, w]) => <col key={name} width={w} />)}
            </colgroup>
            <thead>
              <tr>
                <Corner><svg width="17" height="16" viewBox="0 0 17 16"><path d="M17 0v16H0z" fill="#b9b6c6" /></svg></Corner>
                {columns.map(([name]) => <ColHead key={name} scope="col" $on={name === 'J'}>{name}</ColHead>)}
              </tr>
            </thead>
            <tbody>
              {rows.map((row, i) => <SheetRow key={row.n} row={row} first={i === 0} />)}
            </tbody>
          </Table>
        </SheetView>
        <VScroll>
          <SplitBox />
          <button aria-label="Subir"><Arrow d="M1 7h7L4.500 3z" /></button>
          <i />
          <Thumb aria-label="Desplazamiento vertical"><svg width="8" height="8" viewBox="0 0 8 8" stroke="#8b8896"><path d="M0 .5h8M0 2.500h8M0 4.500h8M0 6.500h8" /></svg></Thumb>
          <i />
          <button aria-label="Bajar"><Arrow d="M1 3h7L4.500 7z" /></button>
        </VScroll>
        <Pointer>
          <svg width="15" height="15" viewBox="0 0 15 15">
            <path d="M6 2h5v4h4v5h-4v4H6v-4H2V6h4z" fill="#111" />
            <path d="M5 1h4.500v4h4v4.500h-4v4H5v-4H1V5h4z" fill="#fff" stroke="#111" />
          </svg>
        </Pointer>
      </SheetArea>

      <SheetBar>
        <SheetNav>
          <button aria-label="Primera hoja"><Arrow d="M2 1v7h.5V1zM8 1v7L4 4.500z" /></button>
          <button aria-label="Hoja anterior"><Arrow d="M6 1v7L3 4.500z" /></button>
          <button aria-label="Hoja siguiente"><Arrow d="M3 1v7l3-3.500z" /></button>
          <button aria-label="Última hoja"><Arrow d="M1 1v7l4-3.500zM7 1v7h.5V1z" /></button>
        </SheetNav>
        {sheetTabs.map((name) => (
          <SheetTab key={name} $active={name === sheet} onClick={() => setSheet(name)}>{name}</SheetTab>
        ))}
        <SheetTab aria-label="Insertar hoja"><NewSheetIcon /></SheetTab>
        <HScroll>
          <SplitBox />
          <button aria-label="Izquierda"><Arrow d="M6 1v7L3 4.500z" /></button>
          <Thumb $across aria-label="Desplazamiento horizontal"><svg width="8" height="7" viewBox="0 0 8 7" stroke="#8b8896"><path d="M.5 0v7M2.500 0v7M4.500 0v7M6.500 0v7" /></svg></Thumb>
          <i />
          <button aria-label="Derecha"><Arrow d="M3 1v7l3-3.500z" /></button>
          <SplitBox />
        </HScroll>
      </SheetBar>

      <StatusBar>
        <span>Listo</span>
        <Divider />
        <ViewTools>
          <Divider $m={4} />
          <ViewButton $w={18} $on aria-label="Normal"><ViewIcon d="M4.500 0v11M8.500 0v11M0 3.500h13M0 7.500h13" /></ViewButton>
          <ViewButton $w={18} aria-label="Diseño de página"><ViewIcon d="M3.500 2.500h6v6h-6z" /></ViewButton>
          <ViewButton $w={18} aria-label="Salto de página"><ViewIcon d="M4.500 0v6.500h4V0" /></ViewButton>
          <Tool $w={42}>160%</Tool>
          <RoundButton aria-label="Alejar"><svg width="7" height="7" viewBox="0 0 7 7" stroke="#444"><path d="M0 3.500h7" /></svg></RoundButton>
          <ZoomSlider type="range" aria-label="Zoom" value={zoom} onChange={(e) => setZoom(e.target.value)} />
          <RoundButton aria-label="Acercar"><svg width="7" height="7" viewBox="0 0 7 7" stroke="#444"><path d="M0 3.500h7M3.500 0v7" /></svg></RoundButton>
        </ViewTools>
      </StatusBar>

      <Taskbar>
        <StartButton><Flag />Inicio</StartButton>
        {tasks.map(([icon, label], i) => (
          <TaskButton key={label} $active={i === 0}>{icon}{label}</TaskButton>
        ))}
        <Language>ES</Language>
        <Tray>
          <button aria-label="Mostrar iconos ocultos">
            <svg width="16" height="16" viewBox="0 0 16 16"><circle cx="8" cy="8" r="7.500" fill="#3a9bf0" stroke="#8fcbfa" /><path d="M9.500 4.500L6 8l3.500 3.500" fill="none" stroke="#fff" strokeWidth="1.800" /></svg>
          </button>
          <TrayIcon />
          <time>11:56</time>
        </Tray>
      </Taskbar>
    </Window>
  );
}

export default App;
